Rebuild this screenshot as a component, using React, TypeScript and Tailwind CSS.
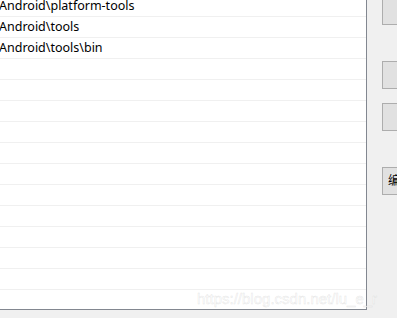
import React from 'react';

const paths = [
  'Android\\platform-tools',
  'Android\\tools',
  'Android\\tools\\bin',
];

export default function App() {
  const rows = Array.from({ length: 15 }, (_, i) => paths[i] ?? '');

  return (
    <div className="relative flex w-[397px] h-[318px] overflow-hidden bg-[#f0f0f0] text-[12px] text-black" style={{ fontFamily: '"Noto Sans", "Noto Sans CJK SC", sans-serif' }}>
      {/* path list */}
      <div className="w-[367px] h-[310px] shrink-0 bg-white border-r border-b border-[#828790] overflow-hidden">
        <div className="-mt-[4px]">
          {rows.map((p, i) => (
            <div key={i} className="h-[21px] border-b border-[#f0f0f0] flex items-center pt-[1px] -ml-[1px] text-[12.5px] leading-none whitespace-nowrap">
              {p}
            </div>
          ))}
        </div>
      </div>

      {/* side buttons */}
      <div className="flex flex-col pl-[15px] -mt-[4px]">
        <div className="w-[60px] h-[29px] shrink-0 bg-[#e1e1e1] border border-[#adadad]" />
        <div className="w-[60px] h-[28px] shrink-0 mt-[36px] bg-[#e1e1e1] border border-[#adadad]" />
        <div className="w-[60px] h-[28px] shrink-0 mt-[14px] bg-[#e1e1e1] border border-[#adadad]" />
        <div className="w-[60px] h-[28px] shrink-0 mt-[36px] bg-[#e1e1e1] border border-[#adadad] flex items-center pl-[5px] text-[12px]">
          编辑文本
        </div>
      </div>

      {/* watermark */}
      <div className="absolute left-[197px] top-[288px] text-[15px] text-white/70 whitespace-nowrap" style={{ fontFamily: '"Liberation Sans", Arial, sans-serif', WebkitTextStroke: '0.5px rgba(200,200,200,0.45)' }}>
        https://blog.csdn.net/lu_e_r
      </div>
    </div>
  );
}
